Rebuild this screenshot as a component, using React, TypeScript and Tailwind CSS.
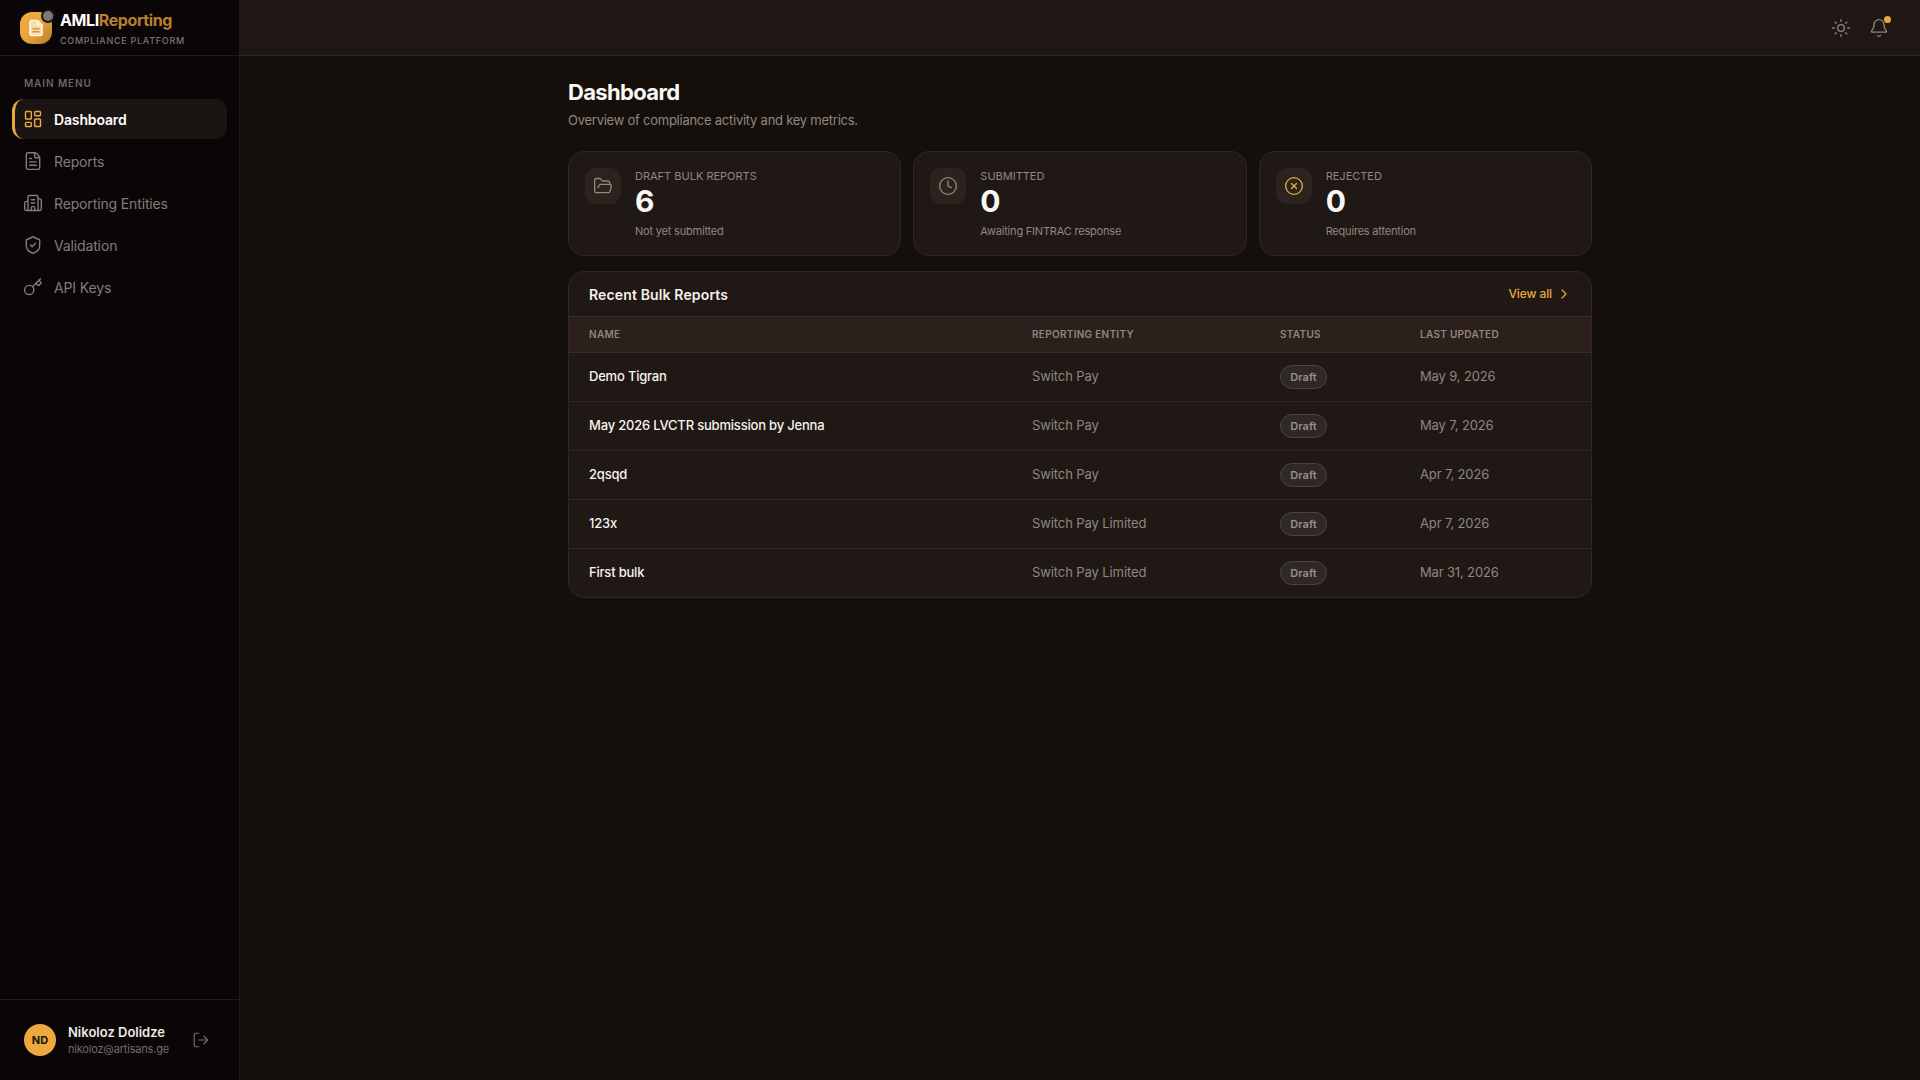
import { Bell, Building2, ChevronRight, CircleX, Clock, FileText, FolderOpen, Key, LayoutDashboard, LogOut, ShieldCheck, Sun } from 'lucide-react'

const navItems = [
  { label: 'Dashboard', icon: LayoutDashboard, active: true },
  { label: 'Reports', icon: FileText },
  { label: 'Reporting Entities', icon: Building2 },
  { label: 'Validation', icon: ShieldCheck },
  { label: 'API Keys', icon: Key },
]

const stats = [
  { label: 'DRAFT BULK REPORTS', value: '6', note: 'Not yet submitted', icon: FolderOpen, tint: 'text-[#8f8780]' },
  { label: 'SUBMITTED', value: '0', note: 'Awaiting FINTRAC response', icon: Clock, tint: 'text-[#8f8780]' },
  { label: 'REJECTED', value: '0', note: 'Requires attention', icon: CircleX, tint: 'text-[#e9a93f]' },
]

const reports = [
  { name: 'Demo Tigran', entity: 'Switch Pay', updated: 'May 9, 2026' },
  { name: 'May 2026 LVCTR submission by Jenna', entity: 'Switch Pay', updated: 'May 7, 2026' },
  { name: '2qsqd', entity: 'Switch Pay', updated: 'Apr 7, 2026' },
  { name: '123x', entity: 'Switch Pay Limited', updated: 'Apr 7, 2026' },
  { name: 'First bulk', entity: 'Switch Pay Limited', updated: 'Mar 31, 2026' },
]

function Logo() {
  return (
    <div className="relative h-8 w-8 rounded-[12px] bg-gradient-to-br from-[#eeab40] via-[#e8a63c] to-[#b97d2c] flex items-center justify-center">
      <svg width="18" height="18" viewBox="0 0 24 24" fill="none" stroke="#fdf3e0" strokeWidth="2.2" strokeLinejoin="round" strokeLinecap="round">
        <path d="M14 2H6a2 2 0 0 0-2 2v16a2 2 0 0 0 2 2h12a2 2 0 0 0 2-2V8z" fill="#f8dca8" />
        <path d="M14 2v6h6" />
        <path d="M8 13h8M8 17h8" stroke="#d8953a" />
      </svg>
      <span className="absolute -right-[3px] -top-[3px] h-[14px] w-[14px] rounded-full bg-[#7d7a76] border-2 border-[#1d1814]" />
    </div>
  )
}

function Sidebar() {
  return (
    <aside className="w-[240px] shrink-0 flex flex-col bg-[#0a0506] border-r border-[#221c19]">
      <div className="h-[56px] shrink-0 flex items-center gap-2 pl-5 border-b border-[#221c19]">
        <Logo />
        <div className="pt-[4px]">
          <div className="text-[16px] leading-5 font-bold tracking-[-0.025em] text-white">
            AMLI<span className="text-[#b9802f]">Reporting</span>
          </div>
          <div className="mt-[3px] text-[9px] leading-4 font-medium tracking-[0.08em] text-[#7d756f]">COMPLIANCE PLATFORM</div>
        </div>
      </div>

      <nav className="flex-1 px-3 pt-[20px]">
        <div className="pl-3 text-[10px] leading-[14px] font-semibold tracking-[0.09em] text-[#6d6660]">MAIN MENU</div>
        <div className="mt-[9px] flex flex-col gap-[2px]">
          {navItems.map((item) => (
            <div
              key={item.label}
              className={
                item.active
                  ? 'h-10 flex items-center gap-[11px] pl-[8px] rounded-xl border-l-[3px] border-[#e9a93f] bg-[#1a1412] text-white font-semibold'
                  : 'h-10 flex items-center gap-[11px] pl-[11px] text-[#847c76]'
              }
            >
              <item.icon size={20} strokeWidth={1.7} className={item.active ? 'text-[#e9a93f]' : ''} />
              <span className="text-[14px] tracking-[-0.01em]">{item.label}</span>
            </div>
          ))}
        </div>
      </nav>

      <div className="h-[81px] shrink-0 flex items-center pl-6 border-t border-[#221c19]">
        <div className="h-8 w-8 rounded-full bg-[#e9a93f] flex items-center justify-center text-[11px] font-bold text-[#1a1208]">ND</div>
        <div className="ml-3 w-[124px]">
          <div className="text-[13px] leading-[18px] font-semibold text-[#efeae5]">Nikoloz Dolidze</div>
          <div className="text-[11px] leading-4 tracking-[-0.2px] text-[#746c66]">nikoloz@artisans.ge</div>
        </div>
        <LogOut size={18} strokeWidth={1.6} className="text-[#746c66]" />
      </div>
    </aside>
  )
}

function StatCard({ stat }: { stat: (typeof stats)[number] }) {
  return (
    <div className="h-[105px] flex gap-[14px] pl-4 pt-4 rounded-2xl border border-[#302622] bg-[#201814]">
      <div className="h-9 w-9 shrink-0 rounded-[11px] bg-[#2c231f] flex items-center justify-center">
        <stat.icon size={20} strokeWidth={1.6} className={stat.tint} />
      </div>
      <div className="-mt-[1px]">
        <div className="text-[11px] leading-[18px] text-[#8f8780]">{stat.label}</div>
        <div className="text-[30px] leading-[36px] -mt-[2px] font-bold text-[#fbf8f4]">{stat.value}</div>
        <div className="mt-[4px] text-[11px] leading-4 tracking-[-0.2px] text-[#8f8780]">{stat.note}</div>
      </div>
    </div>
  )
}

function ReportsTable() {
  return (
    <div className="mt-[15px] rounded-2xl border border-[#302622] bg-[#201814] overflow-hidden">
      <div className="h-[44px] flex items-center justify-between pl-5 pr-[19px]">
        <h2 className="text-[14px] tracking-[0.01em] font-semibold text-[#f4f0eb]">Recent Bulk Reports</h2>
        <a className="flex items-center gap-[4px] text-[12px] tracking-[-0.1px] font-medium text-[#e9a93f]">
          View all
          <ChevronRight size={16} strokeWidth={1.8} />
        </a>
      </div>
      <div className="h-[37px] grid grid-cols-[443px_248px_140px_1fr] items-center px-5 bg-[#2b201c] border-y border-[#372c28] text-[10px] font-semibold tracking-[0.03em] text-[#8f8780]">
        <div>NAME</div>
        <div>REPORTING ENTITY</div>
        <div>STATUS</div>
        <div>LAST UPDATED</div>
      </div>
      {reports.map((report, index) => (
        <div
          key={report.name}
          className={
            index === 0
              ? 'h-[48px] grid grid-cols-[443px_248px_140px_1fr] items-center px-5 text-[13px]'
              : 'h-[49px] grid grid-cols-[443px_248px_140px_1fr] items-center px-5 text-[13px] border-t border-[#302622]'
          }
        >
          <div className="font-medium tracking-[-0.2px] text-[#f7f3ee]">{report.name}</div>
          <div className="tracking-[-0.1px] text-[#8f8780]">{report.entity}</div>
          <div>
            <span className="inline-flex h-6 w-[47px] items-center justify-center rounded-full border border-[#4c433e] bg-[#2f2825] text-[11px] font-semibold text-[#96908a]">Draft</span>
          </div>
          <div className="tracking-[-0.15px] text-[#8f8780]">{report.updated}</div>
        </div>
      ))}
    </div>
  )
}

export default function App() {
  return (
    <div className="h-[1080px] flex bg-[#150f0b] overflow-hidden font-['Inter',sans-serif]">
      <Sidebar />
      <div className="flex-1 flex flex-col">
        <header className="h-[56px] shrink-0 flex items-center justify-end gap-[18px] pr-[31px] bg-[#1e1713] border-b border-[#302824]">
          <Sun size={20} strokeWidth={1.6} className="text-[#8f8780]" />
          <div className="relative">
            <Bell size={20} strokeWidth={1.6} className="text-[#8f8780]" />
            <span className="absolute -right-[1.5px] -top-[1.5px] h-[7px] w-[7px] rounded-full bg-[#e9a93f]" />
          </div>
        </header>
        <main className="w-[1024px] mx-auto pt-[20px]">
          <h1 className="text-[22px] leading-8 font-bold tracking-[-0.03em] text-[#fbf8f4]">Dashboard</h1>
          <p className="mt-[2px] text-[13px] leading-5 tracking-[-0.25px] text-[#8f8780]">Overview of compliance activity and key metrics.</p>
          <div className="mt-[21px] grid grid-cols-3 gap-3">
            {stats.map((stat) => (
              <StatCard key={stat.label} stat={stat} />
            ))}
          </div>
          <ReportsTable />
        </main>
      </div>
    </div>
  )
}
